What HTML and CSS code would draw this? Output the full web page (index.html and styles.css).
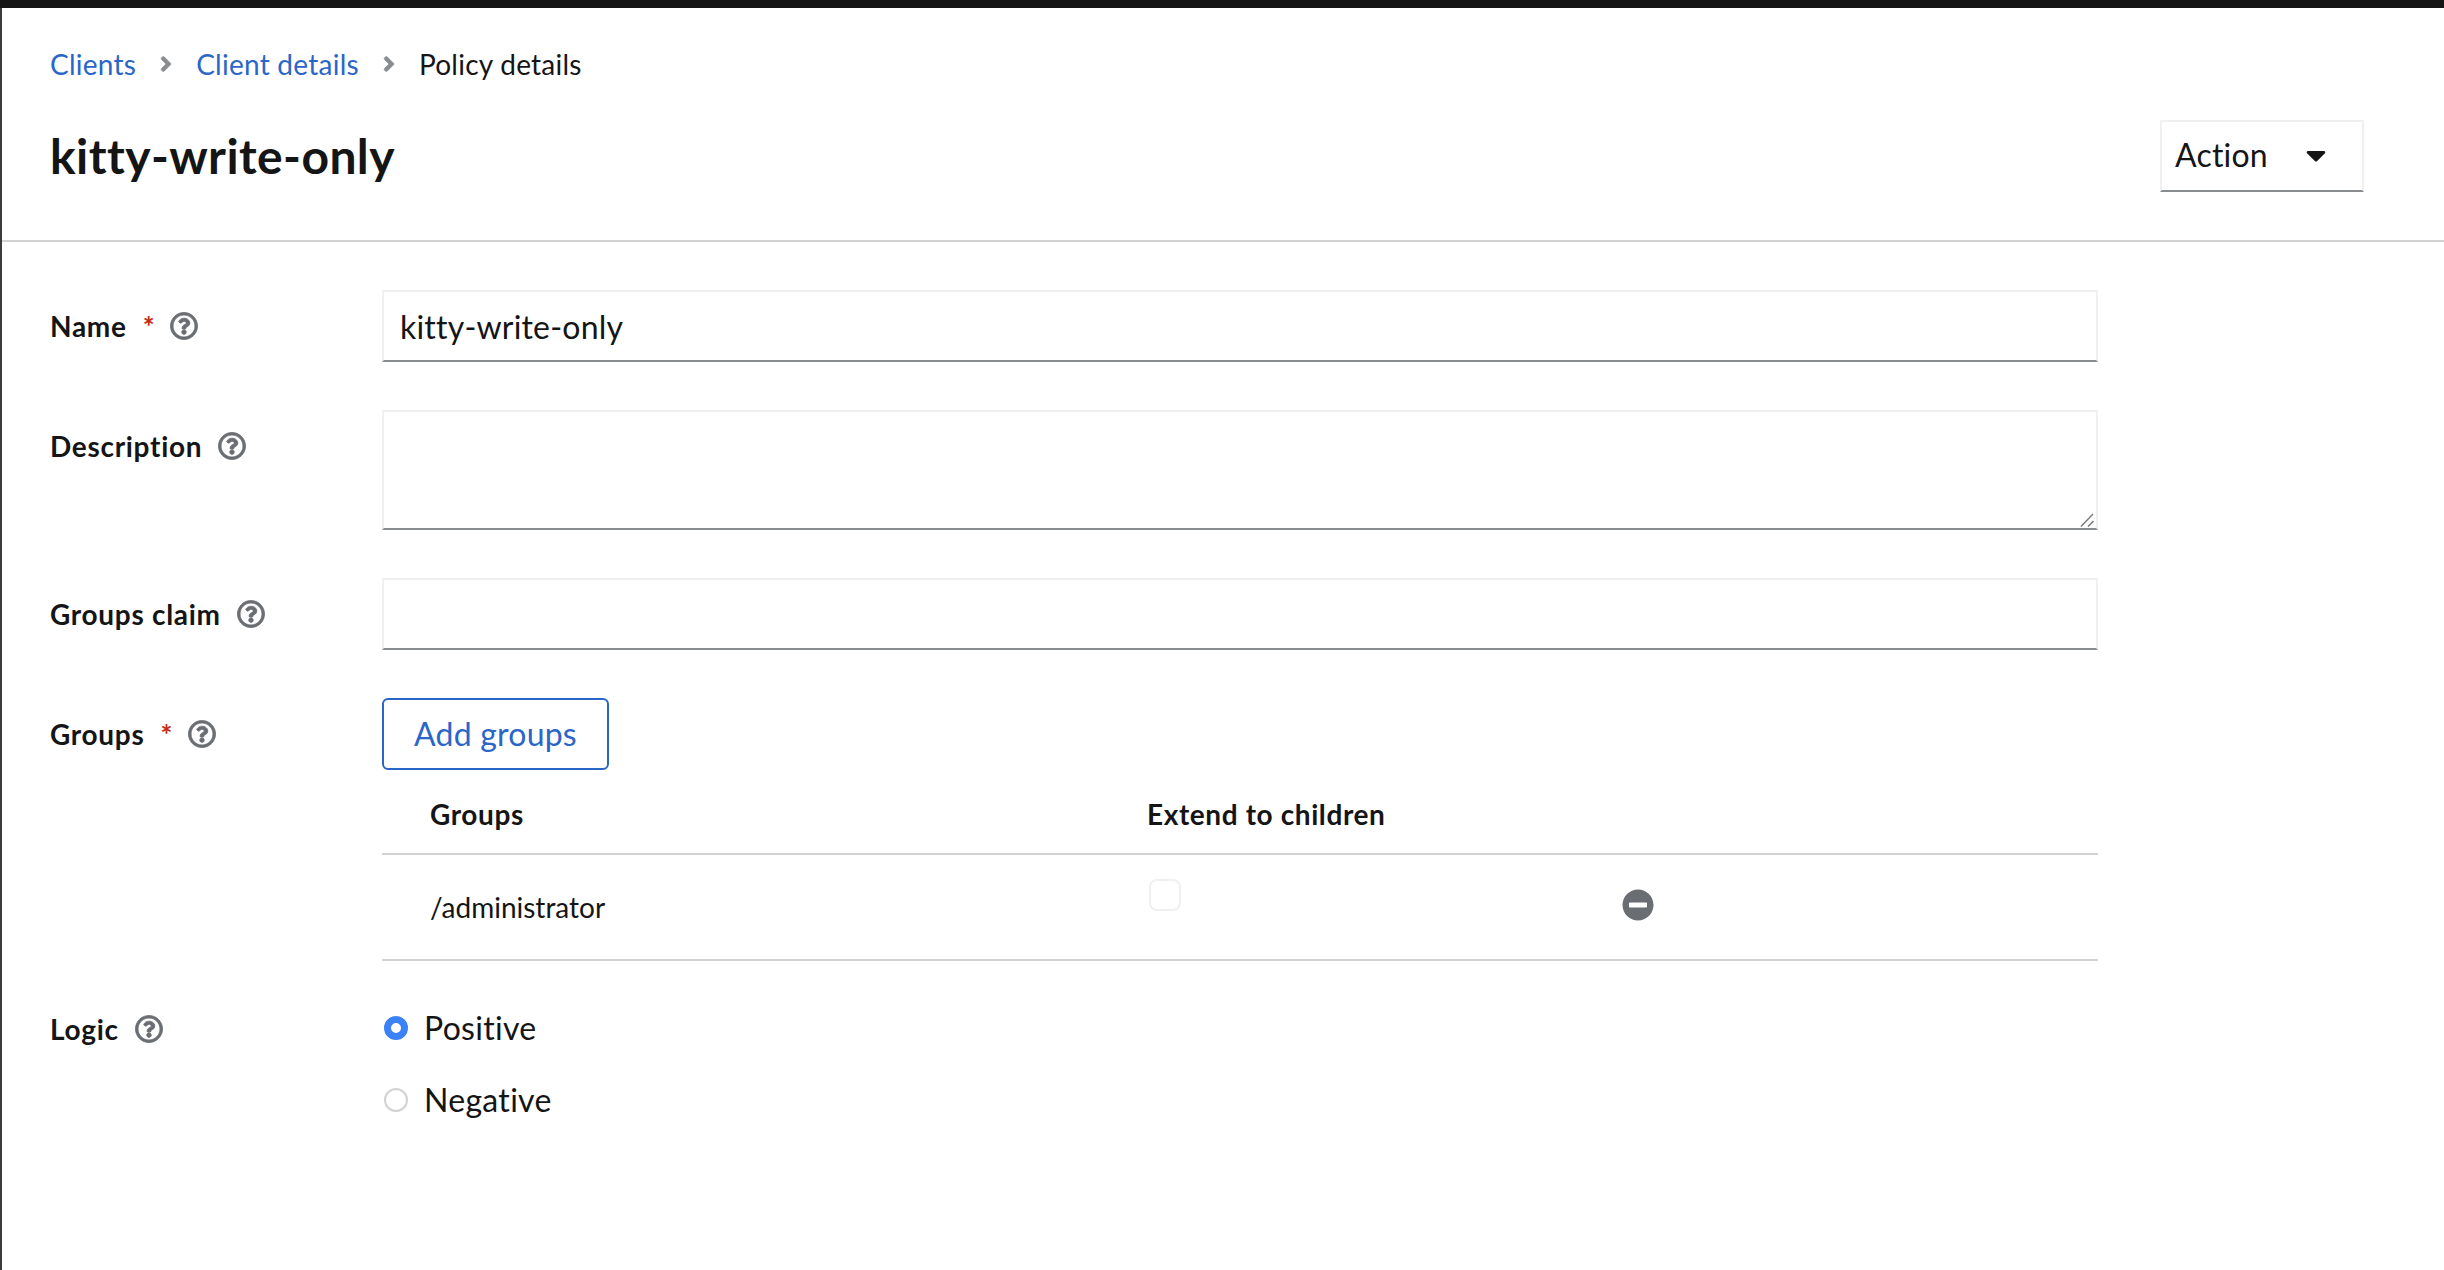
FILE: index.html
```html
<!DOCTYPE html>
<html lang="en">
<head>
<meta charset="utf-8">
<title>Policy details</title>
<link rel="stylesheet" href="styles.css">
</head>
<body>
<svg class="defs" width="0" height="0" aria-hidden="true">
  <symbol id="help" viewBox="0 0 512 512"><path d="M256 8C119.043 8 8 119.083 8 256c0 136.997 111.043 248 248 248s248-111.003 248-248C504 119.083 392.957 8 256 8zm0 448c-110.532 0-200-89.431-200-200 0-110.495 89.472-200 200-200 110.491 0 200 89.471 200 200 0 110.53-89.431 200-200 200zm107.244-255.2c0 67.052-72.421 68.084-72.421 92.863V300c0 6.627-5.373 12-12 12h-45.647c-6.627 0-12-5.373-12-12v-8.659c0-35.745 27.1-50.034 47.579-61.516 17.561-9.845 28.324-16.541 28.324-29.579 0-17.246-21.999-28.693-39.784-28.693-23.189 0-33.894 10.977-48.942 29.969-4.057 5.12-11.46 6.071-16.666 2.124l-27.824-21.098c-5.107-3.872-6.251-11.066-2.644-16.363C184.846 131.491 214.94 112 261.794 112c49.071 0 101.45 38.304 101.45 88.8zM298 368c0 23.159-18.841 42-42 42s-42-18.841-42-42 18.841-42 42-42 42 18.841 42 42z"/></symbol>
  <symbol id="angle" viewBox="0 0 256 512"><path d="M224.3 273l-136 136c-9.4 9.4-24.6 9.4-33.9 0l-22.6-22.6c-9.4-9.4-9.4-24.6 0-33.9l96.4-96.4-96.4-96.4c-9.4-9.4-9.4-24.6 0-33.9L54.3 103c9.4-9.4 24.6-9.4 33.9 0l136 136c9.5 9.4 9.5 24.6.1 34z"/></symbol>
</svg>
<div class="topbar"></div>
<div class="page">
  <header class="head">
    <nav class="crumbs">
      <a class="link" href="#">Clients</a>
      <svg class="chev"><use href="#angle"/></svg>
      <a class="link" href="#">Client details</a>
      <svg class="chev"><use href="#angle"/></svg>
      <span>Policy details</span>
    </nav>
    <div class="title-row">
      <h1 class="title">kitty-write-only</h1>
      <button class="action" type="button">
        <span>Action</span>
        <svg class="caret" viewBox="0 0 320 512"><path d="M31.3 192h257.3c17.8 0 26.7 21.5 14.1 34.1L174.1 354.8c-7.8 7.8-20.5 7.8-28.3 0L17.2 226.1C4.6 213.5 13.5 192 31.3 192z"/></svg>
      </button>
    </div>
  </header>
  <form class="form">
    <div class="row">
      <div class="label"><span>Name</span><span class="star">*</span><svg class="help"><use href="#help"/></svg></div>
      <div class="field"><input class="text" type="text" value="kitty-write-only"></div>
    </div>
    <div class="row">
      <div class="label"><span>Description</span><svg class="help"><use href="#help"/></svg></div>
      <div class="field area-wrap">
        <textarea class="text area"></textarea>
        <svg class="grip" viewBox="0 0 14 14"><path d="M1 13.5 13 1M8 13.5 13.5 8"/></svg>
      </div>
    </div>
    <div class="row">
      <div class="label"><span>Groups claim</span><svg class="help"><use href="#help"/></svg></div>
      <div class="field"><input class="text" type="text"></div>
    </div>
    <div class="row">
      <div class="label"><span>Groups</span><span class="star">*</span><svg class="help"><use href="#help"/></svg></div>
      <div class="field">
        <button class="add" type="button">Add groups</button>
        <table class="table">
          <thead>
            <tr><th class="c1">Groups</th><th class="c2">Extend to children</th><th></th></tr>
          </thead>
          <tbody>
            <tr>
              <td class="c1">/administrator</td>
              <td class="c2 top"><input class="check" type="checkbox"></td>
              <td class="top-icon"><svg class="minus" viewBox="0 0 512 512"><path d="M256 8C119 8 8 119 8 256s111 248 248 248 248-111 248-248S393 8 256 8zM124 296c-6.6 0-12-5.4-12-12v-56c0-6.6 5.4-12 12-12h264c6.6 0 12 5.4 12 12v56c0 6.6-5.4 12-12 12H124z"/></svg></td>
            </tr>
          </tbody>
        </table>
      </div>
    </div>
    <div class="row logic">
      <div class="label"><span>Logic</span><svg class="help"><use href="#help"/></svg></div>
      <div class="field radios">
        <label class="radio-line"><input class="radio" type="radio" name="logic" checked><span>Positive</span></label>
        <label class="radio-line"><input class="radio" type="radio" name="logic"><span>Negative</span></label>
      </div>
    </div>
  </form>
</div>
</body>
</html>
```
FILE: styles.css
```css
* { box-sizing: border-box; }
html, body { height: 100%; }
body {
  margin: 0;
  display: flex;
  flex-direction: column;
  background: #fff;
  color: #151515;
  font-family: "Lato", "Liberation Sans", sans-serif;
  font-size: 28px;
  line-height: 32px;
  overflow: hidden;
}
.defs { position: absolute; }
.topbar { height: 8px; background: #151515; flex: none; }
.page { flex: 1; border-left: 2px solid #3c3c3c; }
.head { padding: 40px 80px 48px 48px; border-bottom: 2px solid #d2d2d2; }
.crumbs { display: flex; align-items: center; height: 32px; letter-spacing: 0.25px; }
.link { color: #2a66c8; text-decoration: none; }
.chev { width: 12px; height: 24px; margin: 0 24px; fill: #8a8d90; stroke: #8a8d90; stroke-width: 16px; }
.title-row { display: flex; justify-content: space-between; align-items: center; margin-top: 40px; height: 72px; }
.title { margin: 0; font-size: 48px; line-height: 72px; font-weight: 700; letter-spacing: 0.4px; }
.action {
  width: 204px; height: 72px; padding: 0 0 2px 13px;
  display: flex; align-items: center;
  background: #fff; color: #151515;
  border: 2px solid #f0f0f0; border-bottom-color: #8a8d90;
  font: inherit; font-size: 32px; letter-spacing: 0.2px;
}
.caret { width: 20px; height: 32px; margin-left: 38px; fill: #151515; }
.form { padding: 48px 0 0 48px; display: flex; flex-direction: column; gap: 48px; }
.row { display: flex; }
.label { width: 332px; flex: none; display: flex; align-items: center; gap: 16px; height: 32px; margin-top: 20px; font-weight: 700; letter-spacing: 0.7px; }
.star { color: #c42b10; margin-right: -1px; }
.help { width: 28px; height: 28px; fill: #6a6e73; stroke: #6a6e73; stroke-width: 14px; }
.field { width: 1716px; flex: none; }
.text {
  display: block; width: 100%; height: 72px; padding: 0 16px;
  border: 2px solid #f0f0f0; border-bottom-color: #8a8d90; border-radius: 0;
  outline: none; background: #fff; color: #151515;
  font: inherit; font-size: 32px; letter-spacing: 0.2px;
}
.area-wrap { position: relative; }
.area { height: 120px; resize: none; }
.grip { position: absolute; right: 4px; bottom: 3px; width: 14px; height: 14px; fill: none; stroke: #808080; stroke-width: 1.6px; }
.add {
  display: block; width: 227px; height: 72px; padding: 0;
  background: #fff; color: #2a66c8;
  border: 2px solid #2a66c8; border-radius: 6px;
  font: inherit; font-size: 32px; letter-spacing: 0.2px;
}
.table { width: 100%; table-layout: fixed; border-collapse: collapse; }
.table th { height: 84px; padding: 27px 0 23px; text-align: left; font-weight: 700; border-bottom: 2px solid #d2d2d2; letter-spacing: 0.6px; }
.table td { height: 106px; padding: 0; border-bottom: 2px solid #d2d2d2; }
.c1 { width: 765px; padding-left: 48px !important; }
.c2 { width: 475px; }
.table .top { vertical-align: top; padding: 24px 0 0 2px; }
.table .top-icon { vertical-align: top; padding-top: 34px; }
.check {
  appearance: none; display: block; margin: 0; width: 32px; height: 32px;
  border: 2px solid #f0f0f0; border-radius: 8px; background: #fff;
}
.minus { display: block; width: 32px; height: 32px; fill: #6a6e73; }
.radios { display: flex; flex-direction: column; gap: 40px; padding-top: 3px; font-size: 32px; letter-spacing: 0.3px; }
.logic .label { margin-top: 4px; }
.radio-line { display: flex; align-items: center; height: 32px; gap: 16px; }
.radio {
  appearance: none; display: block; margin: 0 0 0 2px; width: 24px; height: 24px;
  border: 2px solid #d2d2d2; border-radius: 50%; background: #fff;
}
.radio:checked { border: 7px solid #3b82f6; }
```
